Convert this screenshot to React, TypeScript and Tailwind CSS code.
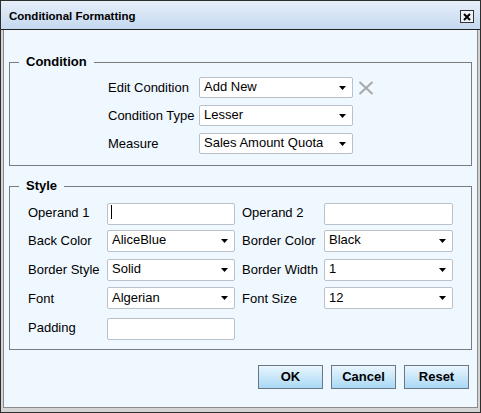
import React from "react";

const font = { fontFamily: '"Liberation Sans", Arial, sans-serif' };

function Caret() {
  return (
    <svg className="h-[4px] w-[7px] shrink-0" viewBox="0 0 7 4" aria-hidden>
      <path d="M0 0H7L3.5 4Z" fill="#000" />
    </svg>
  );
}

function FakeSelect({ value, h = "h-[21px]" }: { value: string; h?: string }) {
  return (
    <div
      className={`flex ${h} w-full items-center justify-between rounded-[2px] border border-[#b9c2cb] bg-white pl-[4px] pr-[6px] text-[13px] text-black`}
    >
      <span className="-mt-[2px] leading-none">{value}</span>
      <Caret />
    </div>
  );
}

function TextBox({ focused }: { focused?: boolean }) {
  return (
    <div className="relative h-[22px] w-full">
      <input
        type="text"
        className="h-full w-full rounded-[2px] border border-[#b9c2cb] bg-white px-[4px] text-[13px] outline-none"
      />
      {focused && (
        <span className="absolute left-[4px] top-[4px] h-[14px] w-px bg-black" />
      )}
    </div>
  );
}

function Label({ children, pad }: { children: React.ReactNode; pad?: boolean }) {
  return (
    <span className={`text-[13px] leading-none text-black ${pad ? "pl-[7px]" : ""}`}>
      {children}
    </span>
  );
}

function Legend({ children }: { children: React.ReactNode }) {
  return (
    <legend className="px-[7px] text-[13px] font-bold leading-4 text-black">
      {children}
    </legend>
  );
}

export default function App() {
  return (
    <div
      className="flex h-[413px] w-[481px] flex-col border border-[#2e2e2e] bg-[#d4d4d4]"
      style={font}
    >
      <div className="flex h-[29px] shrink-0 items-center justify-between border-b border-[#222] bg-gradient-to-b from-[#e6eff9] to-[#c5d8f0] pl-[8px] pr-[6px] pt-[3px]">
        <span className="text-[11.5px] font-bold text-black">Conditional Formatting</span>
        <button
          type="button"
          aria-label="Close"
          className="flex h-[13px] w-[14px] items-center justify-center border border-[#333] bg-[#eef3fa]"
        >
          <svg className="h-[8px] w-[8px]" viewBox="0 0 8 8" aria-hidden>
            <path d="M1 1L7 7M7 1L1 7" stroke="#000" strokeWidth="2" />
          </svg>
        </button>
      </div>

      <div className="flex flex-1 flex-col px-[2px] pb-[4px]">
        <div className="flex flex-1 flex-col border-x border-b border-[#8a8a8a] bg-[#eff7ff]">
          <fieldset className="mx-[5px] mt-[24px] border border-[#7b7b7b] px-[9px] pb-[11px] pt-[7px]">
            <Legend>Condition</Legend>
            <div className="ml-[89px] grid grid-cols-[91px_154px_auto] items-center gap-y-[7px]">
              <Label>Edit Condition</Label>
              <FakeSelect value="Add New" />
              <svg className="ml-[5px] h-[14px] w-[16px]" viewBox="0 0 16 14" aria-hidden>
                <path d="M1.5 1L14.5 13M14.5 1L1.5 13" stroke="#a8a8a8" strokeWidth="2" />
              </svg>
              <Label>Condition Type</Label>
              <FakeSelect value="Lesser" />
              <span />
              <Label>Measure</Label>
              <FakeSelect value="Sales Amount Quota" />
              <span />
            </div>
          </fieldset>

          <fieldset className="mx-[5px] mt-[12px] border border-[#7b7b7b] px-[9px] pb-[11px] pt-[7px]">
            <Legend>Style</Legend>
            <div className="ml-[9px] grid grid-cols-[79px_128px_89px_129px] items-center gap-y-[6.75px]">
              <Label>Operand 1</Label>
              <TextBox focused />
              <Label pad>Operand 2</Label>
              <TextBox />

              <Label>Back Color</Label>
              <FakeSelect value="AliceBlue" h="h-[22px]" />
              <Label pad>Border Color</Label>
              <FakeSelect value="Black" h="h-[22px]" />

              <Label>Border Style</Label>
              <FakeSelect value="Solid" h="h-[22px]" />
              <Label pad>Border Width</Label>
              <FakeSelect value="1" h="h-[22px]" />

              <Label>Font</Label>
              <FakeSelect value="Algerian" h="h-[22px]" />
              <Label pad>Font Size</Label>
              <FakeSelect value="12" h="h-[22px]" />

              <Label>Padding</Label>
              <TextBox />
            </div>
          </fieldset>

          <div className="mr-[8px] mt-[15px] flex justify-end gap-[8px]">
            {["OK", "Cancel", "Reset"].map((t) => (
              <button
                key={t}
                type="button"
                className="h-[24px] w-[65px] border border-[#6b7884] bg-gradient-to-b from-[#e9f5fd] to-[#a9d9f6] text-[13px] font-bold text-black"
              >
                {t}
              </button>
            ))}
          </div>
        </div>
      </div>
    </div>
  );
}
